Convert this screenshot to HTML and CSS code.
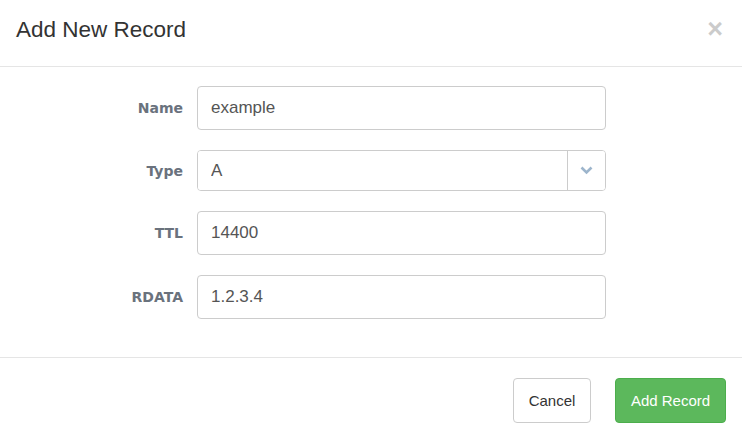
FILE: index.html
```html
<!DOCTYPE html>
<html>
<head>
<meta charset="utf-8">
<link rel="stylesheet" href="styles.css">
</head>
<body>
<div class="modal">
  <div class="modal-header">
    <h4 class="modal-title">Add New Record</h4>
    <button class="close" type="button">&times;</button>
  </div>
  <form class="modal-body">
    <div class="form-row">
      <label class="form-label">Name</label>
      <input class="form-control" type="text" value="example">
    </div>
    <div class="form-row">
      <label class="form-label">Type</label>
      <div class="select-group">
        <select class="select-control"><option>A</option></select>
        <span class="select-addon">
          <svg width="13" height="9" viewBox="0 0 13 9"><path d="M1.5 1.5 L6.5 6.5 L11.5 1.5" fill="none" stroke="#9db5cc" stroke-width="2.6"/></svg>
        </span>
      </div>
    </div>
    <div class="form-row">
      <label class="form-label">TTL</label>
      <input class="form-control" type="text" value="14400">
    </div>
    <div class="form-row">
      <label class="form-label">RDATA</label>
      <input class="form-control" type="text" value="1.2.3.4">
    </div>
  </form>
  <div class="modal-footer">
    <button class="btn btn-default" type="button">Cancel</button>
    <button class="btn btn-success" type="button">Add Record</button>
  </div>
</div>
</body>
</html>
```

FILE: styles.css
```css
* { box-sizing: border-box; }
html, body {
  margin: 0;
  padding: 0;
  background: #fff;
  font-family: "Liberation Sans", Arial, sans-serif;
  color: #333;
}
.modal {
  width: 742px;
  height: 435px;
  background: #fff;
}
.modal-header {
  height: 67px;
  border-bottom: 1px solid #e5e5e5;
  display: flex;
  justify-content: space-between;
  align-items: flex-start;
  padding: 17px 16px 0 16px;
}
.modal-title {
  margin: 0;
  font-size: 22.5px;
  font-weight: normal;
  line-height: 25px;
  color: #333;
}
.close {
  border: 0;
  background: transparent;
  padding: 0;
  margin: 0 3px 0 0;
  font-family: "Liberation Sans", Arial, sans-serif;
  font-size: 27px;
  font-weight: bold;
  line-height: 25px;
  color: #000;
  opacity: 0.2;
  cursor: pointer;
}
.modal-body {
  margin: 0;
  padding: 19px 0 38px 0;
  border-bottom: 1px solid #e5e5e5;
  display: flex;
  flex-direction: column;
  gap: 20px;
}
.form-row {
  display: flex;
  align-items: center;
}
.form-label {
  width: 184px;
  padding-right: 1px;
  text-align: right;
  font-family: "DejaVu Sans", Verdana, sans-serif;
  font-weight: bold;
  font-size: 14px;
  color: #6a727d;
  margin-right: 13px;
}
.form-control {
  width: 409px;
  height: 44px;
  border: 1px solid #ccc;
  border-radius: 4px;
  padding: 0 13px;
  font-family: "Liberation Sans", Arial, sans-serif;
  font-size: 17px;
  color: #555;
  background: #fff;
  outline: none;
}
.select-group {
  width: 409px;
  height: 41px;
  display: flex;
  border: 1px solid #ccc;
  border-radius: 4px;
  overflow: hidden;
}
.select-control {
  flex: 1;
  appearance: none;
  -webkit-appearance: none;
  border: 0;
  background: #fff;
  padding: 0 13px;
  font-family: "Liberation Sans", Arial, sans-serif;
  font-size: 17px;
  color: #555;
  outline: none;
}
.select-addon {
  width: 38px;
  border-left: 1px solid #ccc;
  display: flex;
  align-items: center;
  justify-content: center;
  background: #fff;
}
.modal-footer {
  display: flex;
  justify-content: flex-end;
  gap: 24px;
  padding: 20px 16px 0 0;
}
.btn {
  height: 45px;
  border-radius: 4px;
  padding: 0;
  font-family: "Liberation Sans", Arial, sans-serif;
  font-size: 15px;
  cursor: pointer;
}
.btn-default {
  width: 78px;
  background: #fff;
  border: 1px solid #ccc;
  color: #333;
}
.btn-success {
  width: 111px;
  background: #5cb85c;
  border: 1px solid #4cae4c;
  color: #fff;
}
```
